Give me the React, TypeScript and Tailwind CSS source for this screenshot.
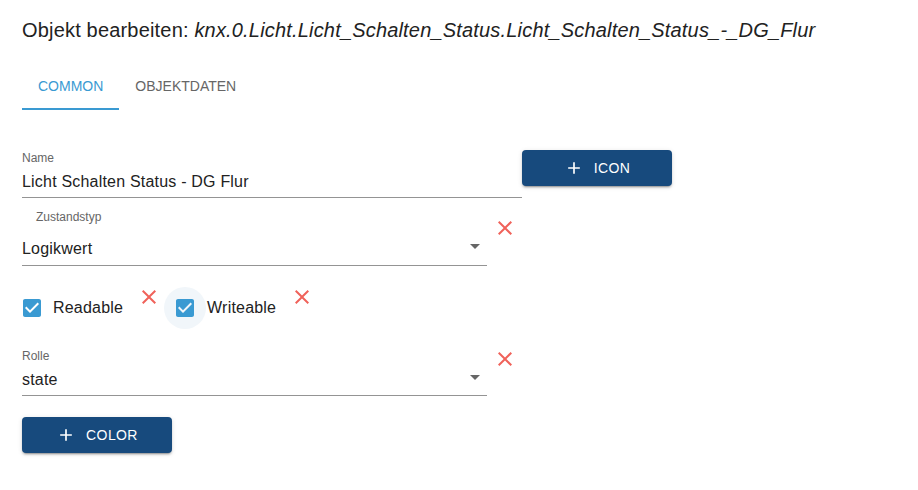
const CloseIcon = () => (
  <svg viewBox="0 0 24 24" className="w-6 h-6 shrink-0" fill="#f0625a">
    <path d="M19 6.41L17.59 5 12 10.59 6.41 5 5 6.41 10.59 12 5 17.59 6.41 19 12 13.41 17.59 19 19 17.59 13.41 12z" />
  </svg>
)

const PlusIcon = () => (
  <svg viewBox="0 0 24 24" className="w-5 h-5" fill="currentColor">
    <path d="M19 13h-6v6h-2v-6H5v-2h6V5h2v6h6v2z" />
  </svg>
)

const CheckBox = ({ halo }: { halo?: boolean }) => (
  <span
    className={`flex items-center justify-center w-[42px] h-[42px] rounded-full ${halo ? "bg-[#f1f6fa]" : ""}`}
  >
    <svg viewBox="0 0 24 24" className="w-6 h-6" fill="#3a9ad2">
      <path d="M19 3H5c-1.11 0-2 .9-2 2v14c0 1.1.89 2 2 2h14c1.11 0 2-.9 2-2V5c0-1.1-.89-2-2-2zm-9 14l-5-5 1.41-1.41L10 14.17l7.59-7.59L19 8l-9 9z" />
    </svg>
  </span>
)

const Arrow = () => (
  <svg viewBox="0 0 10 5" className="w-[10px] h-[5px] mr-[7px] mb-[12px]" fill="#666">
    <path d="M0 0h10L5 5z" />
  </svg>
)

const Button = ({ label }: { label: string }) => (
  <button className="flex items-center justify-center gap-[10px] w-[150px] h-9 rounded bg-[#174a7d] text-white text-sm uppercase tracking-[0.4px] shadow-[0_3px_1px_-2px_rgba(0,0,0,0.2),0_2px_2px_0_rgba(0,0,0,0.14),0_1px_5px_0_rgba(0,0,0,0.12)]">
    <PlusIcon />
    <span>{label}</span>
  </button>
)

export default function App() {
  return (
    <div className="w-[918px] h-[490px] bg-white px-[22px] pt-[17px] text-[#222] font-['Liberation_Sans',Arial,sans-serif]">
      {/* Title */}
      <h1 className="text-xl leading-[26px] tracking-[0.18px]">
        Objekt bearbeiten: <i>knx.0.Licht.Licht_Schalten_Status.Licht_Schalten_Status_-_DG_Flur</i>
      </h1>

      {/* Tabs */}
      <div className="flex mt-[19px] h-12">
        <div className="flex items-center px-4 border-b-2 border-[#3a9ad2] text-sm text-[#3a9ad2] pt-[2px]">
          COMMON
        </div>
        <div className="flex items-center px-4 text-sm text-[#666]">OBJEKTDATEN</div>
      </div>

      {/* Name + icon */}
      <div className="flex items-start mt-10">
        <div className="w-[500px] mt-[1px] border-b border-[#949494]">
          <div className="text-xs leading-[14px] text-[#666]">Name</div>
          <div className="mt-[5px] h-6 leading-6 text-base tracking-[0.2px] pb-[3px] box-content">
            Licht Schalten Status - DG Flur
          </div>
        </div>
        <Button label="Icon" />
      </div>

      {/* Zustandstyp */}
      <div className="flex items-start mt-[12px]">
        <div className="w-[465px] border-b border-[#949494]">
          <div className="text-xs leading-[14px] text-[#666] pl-[14px]">Zustandstyp</div>
          <div className="flex items-end justify-between mt-[13px] h-6 pb-1 box-content">
            <span className="leading-6 text-base tracking-[0.2px]">Logikwert</span>
            <Arrow />
          </div>
        </div>
        <span className="ml-[6px] mt-[6px]">
          <CloseIcon />
        </span>
      </div>

      {/* Checkboxes */}
      <div className="flex items-start mt-[21px] -ml-[11px]">
        <label className="flex items-center">
          <CheckBox />
          <span className="text-base tracking-[0.2px]">Readable</span>
        </label>
        <span className="ml-[14px] -mt-[2px]">
          <CloseIcon />
        </span>
        <label className="flex items-center ml-[3px]">
          <CheckBox halo />
          <span className="text-base tracking-[0.2px] ml-px">Writeable</span>
        </label>
        <span className="ml-[14px] -mt-[2px]">
          <CloseIcon />
        </span>
      </div>

      {/* Rolle */}
      <div className="flex items-start mt-5">
        <div className="w-[465px] border-b border-[#949494]">
          <div className="text-xs leading-[14px] text-[#666]">Rolle</div>
          <div className="flex items-end justify-between mt-[5px] h-6 pb-[3px] box-content">
            <span className="leading-6 text-base tracking-[0.2px]">state</span>
            <Arrow />
          </div>
        </div>
        <span className="ml-[6px] -mt-[2px]">
          <CloseIcon />
        </span>
      </div>

      {/* Color */}
      <div className="mt-[21px]">
        <Button label="Color" />
      </div>
    </div>
  )
}
